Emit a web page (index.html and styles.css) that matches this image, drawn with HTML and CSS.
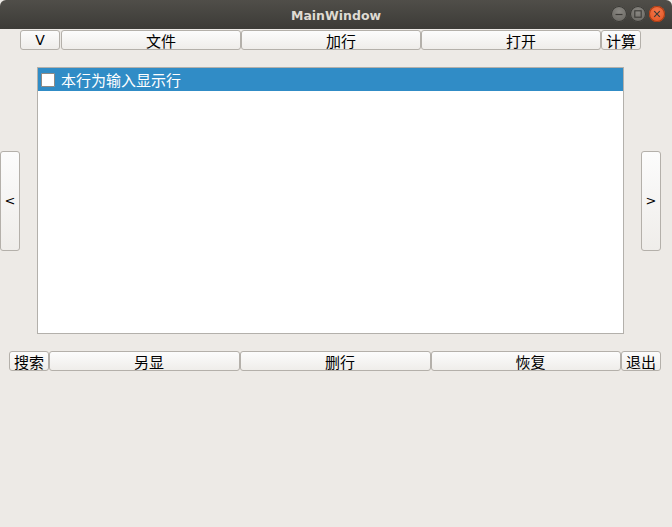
FILE: index.html
```html
<!DOCTYPE html>
<html>
<head>
<meta charset="utf-8">
<link rel="stylesheet" href="styles.css">
</head>
<body>
<div class="window">
  <div class="titlebar">
    <span class="title">MainWindow</span>
    <div class="wm">
      <span class="wm-btn wm-min"><svg width="8" height="8" viewBox="0 0 8 8"><line x1="0.5" y1="4.5" x2="7.5" y2="4.5" stroke="#3c3b37" stroke-width="1.2"/></svg></span>
      <span class="wm-btn wm-max"><svg width="8" height="8" viewBox="0 0 8 8"><rect x="0.8" y="0.8" width="6.4" height="6.4" fill="none" stroke="#3c3b37" stroke-width="1.1"/></svg></span>
      <span class="wm-btn wm-close"><svg width="8" height="8" viewBox="0 0 8 8"><path d="M1.2 1.2 L6.8 6.8 M6.8 1.2 L1.2 6.8" stroke="#3c3b37" stroke-width="1.2"/></svg></span>
    </div>
  </div>

  <div class="toprow">
    <button class="btn w-small latin v-btn">V</button>
    <button class="btn w-wide">文件</button>
    <button class="btn w-wide">加行</button>
    <button class="btn w-wide">打开</button>
    <button class="btn w-small">计算</button>
  </div>

  <div class="middle">
    <button class="btn side latin">&lt;</button>
    <div class="list">
      <div class="item selected">
        <span class="check"></span>
        <span class="item-text">本行为输入显示行</span>
      </div>
    </div>
    <button class="btn side latin">&gt;</button>
  </div>

  <div class="bottomrow">
    <button class="btn w-small">搜索</button>
    <button class="btn w-bwide">另显</button>
    <button class="btn w-bwide">删行</button>
    <button class="btn w-bwide2">恢复</button>
    <button class="btn w-small">退出</button>
  </div>
</div>
</body>
</html>
```

FILE: styles.css
```css
html, body {
  margin: 0;
  padding: 0;
}
body {
  width: 672px;
  height: 527px;
  background: #edeae6;
  font-family: "Noto Sans CJK SC", "DejaVu Sans", sans-serif;
  overflow: hidden;
}
.window {
  display: flex;
  flex-direction: column;
  width: 672px;
  height: 527px;
}
.titlebar {
  height: 29px;
  flex: none;
  background: linear-gradient(#504e49, #3c3b37);
  border-radius: 6px 6px 0 0;
  display: flex;
  align-items: center;
  justify-content: center;
  position: relative;
}
.title {
  color: #dfdbd2;
  font-family: "DejaVu Sans", "Noto Sans", sans-serif;
  font-weight: bold;
  font-size: 12.5px;
  margin-top: 1px;
}
.wm {
  position: absolute;
  right: 7px;
  top: 6px;
  display: flex;
  gap: 3px;
}
.wm-btn {
  width: 16px;
  height: 16px;
  border-radius: 50%;
  display: flex;
  align-items: center;
  justify-content: center;
  background: radial-gradient(circle at 50% 35%, #8a8883, #62605b);
  box-shadow: inset 0 0 0 1px #3a3935;
}
.wm-close {
  background: radial-gradient(circle at 50% 35%, #f5764a, #e0501d);
  box-shadow: inset 0 0 0 1px #a83c14;
}
.btn {
  box-sizing: border-box;
  margin: 0;
  padding: 0;
  height: 20px;
  border: 1px solid #b4b0aa;
  border-radius: 3px;
  background: linear-gradient(#fcfcfc, #efedea);
  font-family: "Noto Sans CJK SC", "DejaVu Sans", sans-serif;
  font-size: 15px;
  line-height: 17px;
  color: #000;
  display: flex;
  align-items: center;
  justify-content: center;
  overflow: hidden;
}
.latin {
  font-family: "DejaVu Sans", sans-serif;
  font-size: 13px;
}
.v-btn {
  font-size: 14px;
}
.toprow {
  flex: none;
  display: flex;
  margin-top: 1px;
  padding-left: 20px;
}
.toprow .btn { height: 20px; }
.w-small { width: 40px; }
.toprow .w-small:first-child { width: 40px; margin-right: 1px; }
.w-wide { width: 180px; padding-left: 20px; }
.middle {
  flex: none;
  display: flex;
  align-items: center;
  margin-top: 17px;
  height: 267px;
}
.side {
  width: 20px;
  height: 100px;
  flex: none;
}
.list {
  box-sizing: border-box;
  width: 587px;
  height: 267px;
  margin: 0 17px;
  background: #fff;
  border: 1px solid #b3b0ab;
  flex: none;
}
.item {
  height: 23px;
  display: flex;
  align-items: center;
  padding-left: 3px;
}
.selected {
  background: #308cc6;
  color: #fff;
}
.check {
  box-sizing: border-box;
  width: 14px;
  height: 14px;
  background: #fff;
  border: 1px solid #8d8a85;
  border-radius: 1px;
  flex: none;
}
.item-text {
  margin-left: 6px;
  font-size: 15px;
  line-height: 20px;
}
.bottomrow {
  flex: none;
  display: flex;
  margin-top: 17px;
  padding-left: 9px;
}
.bottomrow .w-small { width: 40px; }
.w-bwide { width: 191px; padding-left: 9px; }
.w-bwide2 { width: 190px; padding-left: 9px; }
```
